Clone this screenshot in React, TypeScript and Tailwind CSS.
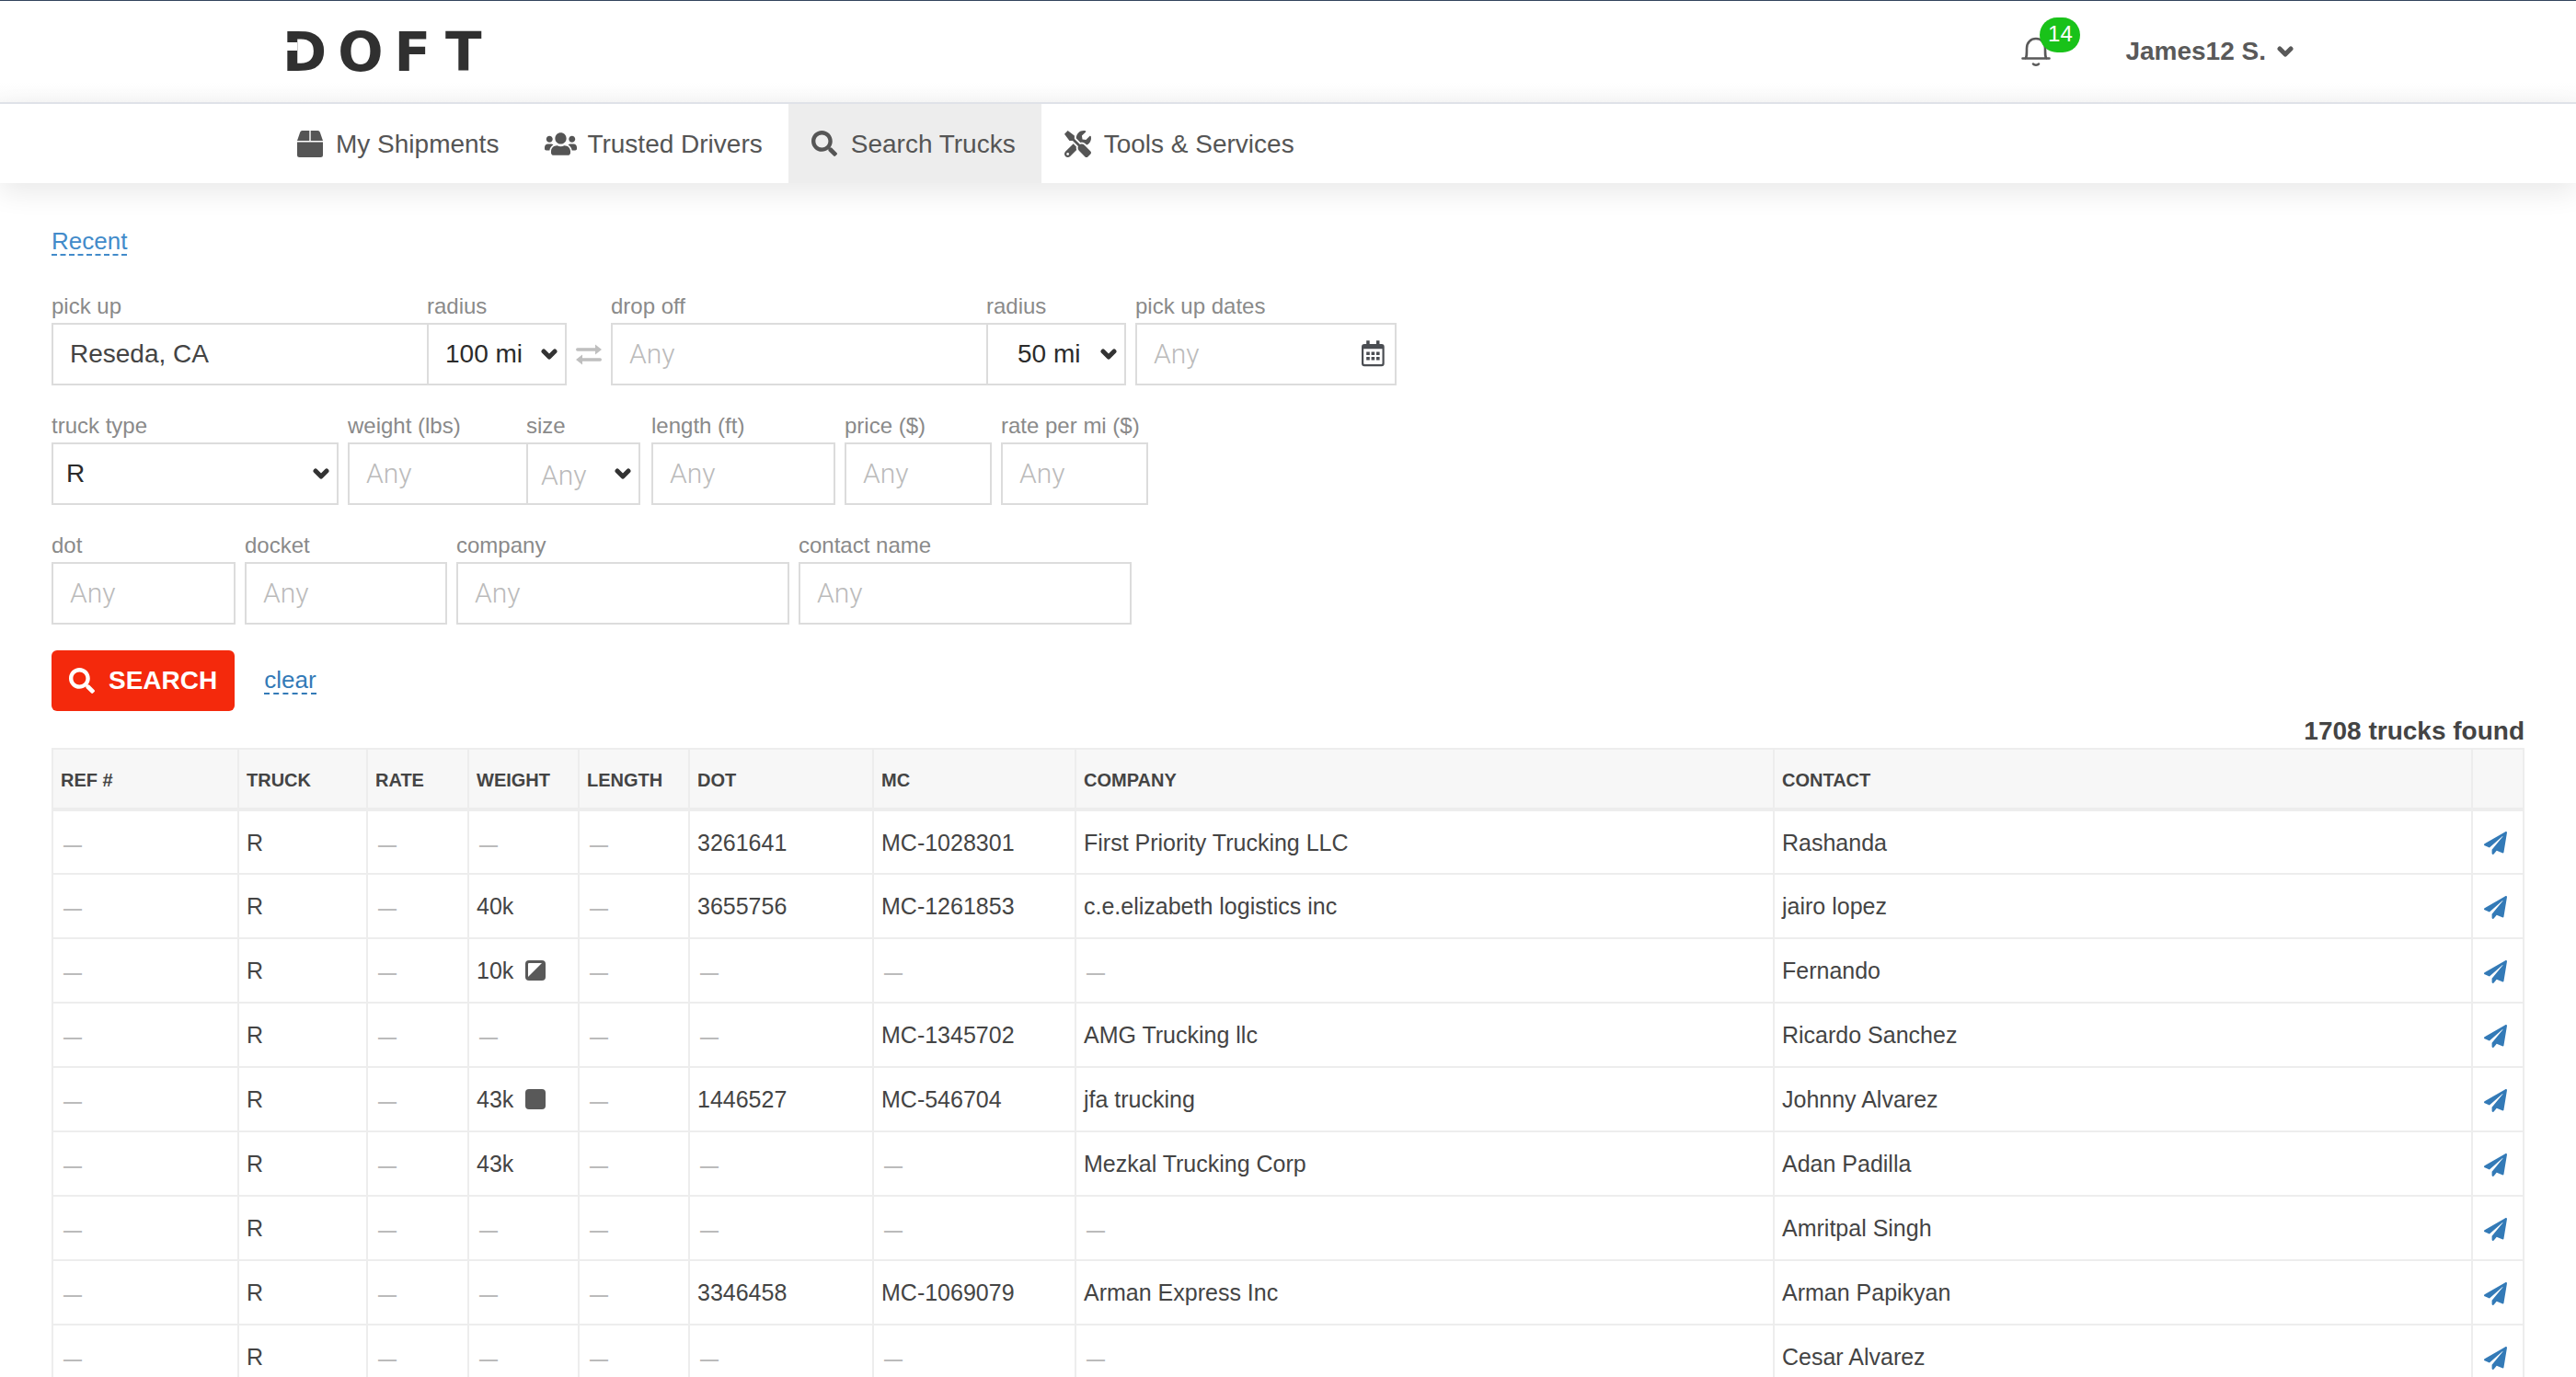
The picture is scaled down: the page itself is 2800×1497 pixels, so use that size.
import type { ReactNode } from 'react';
import { FaPaperPlane, FaSearch, FaTools, FaUsers } from 'react-icons/fa';

interface Truck {
  weight?: string;
  load?: 'full' | 'partial';
  dot?: string;
  mc?: string;
  company?: string;
  contact: string;
}

const trucks: Truck[] = [
  { dot: '3261641', mc: 'MC-1028301', company: 'First Priority Trucking LLC', contact: 'Rashanda' },
  { weight: '40k', dot: '3655756', mc: 'MC-1261853', company: 'c.e.elizabeth logistics inc', contact: 'jairo lopez' },
  { weight: '10k', load: 'partial', contact: 'Fernando' },
  { mc: 'MC-1345702', company: 'AMG Trucking llc', contact: 'Ricardo Sanchez' },
  { weight: '43k', load: 'full', dot: '1446527', mc: 'MC-546704', company: 'jfa trucking', contact: 'Johnny Alvarez' },
  { weight: '43k', company: 'Mezkal Trucking Corp', contact: 'Adan Padilla' },
  { contact: 'Amritpal Singh' },
  { dot: '3346458', mc: 'MC-1069079', company: 'Arman Express Inc', contact: 'Arman Papikyan' },
  { contact: 'Cesar Alvarez' },
];

const navItems = [
  { label: 'My Shipments', icon: <ShipmentIcon />, active: false },
  { label: 'Trusted Drivers', icon: <FaUsers size={35} />, active: false },
  { label: 'Search Trucks', icon: <FaSearch size={28} />, active: true },
  { label: 'Tools & Services', icon: <FaTools size={29} />, active: false },
];

const columns = ['REF #', 'TRUCK', 'RATE', 'WEIGHT', 'LENGTH', 'DOT', 'MC', 'COMPANY', 'CONTACT', ''];

function ShipmentIcon() {
  return (
    <svg viewBox="0 0 28 29" className="w-7 h-[29px]" fill="currentColor" aria-hidden="true">
      <path d="M5.500 0H13.300V11H0L3.200 1.700A2.500 2.500 0 015.500 0zM14.700 0H22.500a2.500 2.500 0 012.300 1.700L28 11H14.700zM0 12.500H28V26.500a2.500 2.500 0 01-2.500 2.500H2.500A2.500 2.500 0 010 26.500z" />
    </svg>
  );
}

function Caret({ className }: { className?: string }) {
  return (
    <svg viewBox="0 0 18 12" className={`w-[18px] h-3 ${className ?? ''}`} fill="none" aria-hidden="true">
      <path d="M3 3l6 6 6-6" stroke="currentColor" strokeWidth="5" strokeLinecap="round" strokeLinejoin="round" />
    </svg>
  );
}

function BellIcon() {
  return (
    <svg viewBox="0 0 32 32" className="size-8" fill="none" stroke="#595959" strokeWidth="2.6" strokeLinecap="round" strokeLinejoin="round" aria-hidden="true">
      <path d="M1.500 23.500h29M4.500 23.500c1.500-1.500 1.500-3.500 1.500-11C6 6 10.500 2 16 2s10 4 10 10.500c0 7.500 0 9.500 1.500 11" />
      <path d="M13 29.500c1.200 1.600 4.800 1.600 6 0" />
    </svg>
  );
}

function SwapIcon() {
  return (
    <svg viewBox="0 0 28 23" className="w-7 h-[23px]" fill="#bfbfbf" aria-hidden="true">
      <path d="M1.700 4.300H21V0.500L28 6 21 11.500V7.700H1.700a1.700 1.700 0 010-3.400zM26.300 18.700H7v3.800L0 17 7 11.500v3.800h19.300a1.700 1.700 0 010 3.400z" />
    </svg>
  );
}

function CalendarIcon() {
  return (
    <svg viewBox="0 0 26 30" className="w-[26px] h-[30px]" fill="#4a4d52" aria-hidden="true">
      <path
        fillRule="evenodd"
        d="M6.200 1.300h3.500V5h7.300V1.300h3.500V5h2.200a3 3 0 013 3v18.300a3 3 0 01-3 3H4a3 3 0 01-3-3V8a3 3 0 013-3h2.200zM3.200 10.300V26a1 1 0 001 1h18.300a1 1 0 001-1V10.300z"
      />
      <path d="M6.200 13.400h3.600V17H6.200zM11.600 13.400h3.600V17h-3.600zM17 13.400h3.600V17H17zM6.200 18.900h3.600v3.600H6.200zM11.600 18.900h3.600v3.600h-3.600zM17 18.900h3.600v3.600H17z" />
    </svg>
  );
}

function Field({ id, label, className, children }: { id: string; label: string; className: string; children: ReactNode }) {
  return (
    <div className={className}>
      <label htmlFor={id} className="block text-2xl leading-9 text-[#8a8a8a] whitespace-nowrap">
        {label}
      </label>
      {children}
    </div>
  );
}

const box = 'block w-full h-[68px] border-2 border-[#dcdcdc] bg-white outline-none';

function TextInput({ id, value, joined }: { id: string; value?: string; joined?: boolean }) {
  return (
    <input
      id={id}
      type="text"
      defaultValue={value}
      placeholder="Any"
      className={`${box} px-[18px] text-[#444] ${value ? 'text-[28px]' : 'text-[30px]'} placeholder:font-['Roboto'] placeholder:font-light placeholder:text-[#bbb] ${joined ? 'border-r-0' : ''}`}
    />
  );
}

function SelectInput({ id, value, className }: { id: string; value: string; className: string }) {
  return (
    <div className="relative">
      <select id={id} defaultValue={value} className={`${box} appearance-none ${className}`}>
        <option>{value}</option>
      </select>
      <Caret className="absolute right-[10px] top-7 text-[#333] pointer-events-none" />
    </div>
  );
}

function Value({ text }: { text?: string }) {
  return text ? <>{text}</> : <span className="pl-[3px] text-xl font-bold text-[#bbb]">—</span>;
}

function LoadMark({ load }: { load: 'full' | 'partial' }) {
  return (
    <svg viewBox="0 0 22 22" className="inline-block align-[-2px] ml-[13px] size-[22px]" aria-hidden="true">
      <rect width="22" height="22" rx="4" fill="#595959" />
      {load === 'partial' && <path d="M3 4a1 1 0 011-1h14L3 18z" fill="#fff" />}
    </svg>
  );
}

function Header() {
  return (
    <header className="border-t border-[#33445c] bg-linear-to-b from-white from-80% to-[#fafafa]">
      <div className="flex items-center justify-between h-[110px] max-w-[2206px] mx-auto px-[10px]">
        <a href="#" aria-label="DOFT" className="relative flex gap-3 pt-0.5 font-['DejaVu_Sans'] font-bold text-[58px] leading-none text-[#303030]">
          <span>D</span>
          <span>O</span>
          <span>F</span>
          <span className="pl-1">T</span>
          <span className="absolute left-1 top-5 w-3 h-[9px] bg-white" />
        </a>
        <div className="flex items-center gap-[81px]">
          <button type="button" aria-label="Notifications" className="relative">
            <BellIcon />
            <span className="absolute left-5 -top-[21px] w-11 h-[38px] rounded-full bg-[#19c219] text-white text-2xl leading-[36px] text-center">
              14
            </span>
          </button>
          <button type="button" className="flex items-center gap-3 font-bold text-[28px] text-[#595959]">
            James12 S.
            <Caret />
          </button>
        </div>
      </div>
    </header>
  );
}

function Nav() {
  return (
    <nav className="border-t-2 border-[#dfe2e8] bg-white shadow-[0_10px_30px_rgba(0,0,0,0.09)]">
      <div className="flex max-w-[2206px] mx-auto">
        {navItems.map((item) => (
          <a
            key={item.label}
            href="#"
            className={`flex items-center gap-[11px] h-[86px] pl-[22px] pr-7 text-[28px] text-[#555] ${item.active ? 'bg-[#ededed]' : ''}`}
          >
            <span className="flex justify-center w-[35px]">{item.icon}</span>
            <span className="pt-0.5">{item.label}</span>
          </a>
        ))}
      </div>
    </nav>
  );
}

function SearchForm() {
  return (
    <form className="flex flex-col gap-[26px]">
      <div className="flex gap-[10px]">
        <div className="flex">
          <Field id="pickup" label="pick up" className="w-[408px]">
            <TextInput id="pickup" value="Reseda, CA" joined />
          </Field>
          <Field id="pickup-radius" label="radius" className="w-[152px]">
            <SelectInput id="pickup-radius" value="100 mi" className="pl-[18px] text-[28px] text-[#2b2b2b]" />
          </Field>
        </div>
        <button type="button" aria-label="Swap" className="flex items-center h-[68px] mt-9">
          <SwapIcon />
        </button>
        <div className="flex">
          <Field id="dropoff" label="drop off" className="w-[408px]">
            <TextInput id="dropoff" joined />
          </Field>
          <Field id="dropoff-radius" label="radius" className="w-[152px]">
            <SelectInput id="dropoff-radius" value="50 mi" className="pl-8 text-[28px] text-[#2b2b2b]" />
          </Field>
        </div>
        <Field id="dates" label="pick up dates" className="w-[284px]">
          <div className="relative">
            <TextInput id="dates" />
            <span className="absolute right-[13px] top-[18px]">
              <CalendarIcon />
            </span>
          </div>
        </Field>
      </div>

      <div className="flex gap-[10px]">
        <Field id="truck-type" label="truck type" className="w-[312px]">
          <SelectInput id="truck-type" value="R" className="pl-[14px] text-[28px] text-[#2b2b2b]" />
        </Field>
        <div className="flex">
          <Field id="weight" label="weight (lbs)" className="w-[194px]">
            <TextInput id="weight" joined />
          </Field>
          <Field id="size" label="size" className="w-[126px] pr-0.5">
            <SelectInput id="size" value="Any" className="pl-[14px] pt-0.5 text-[30px] font-['Roboto'] font-light text-[#bbb]" />
          </Field>
        </div>
        <Field id="length" label="length (ft)" className="w-[200px]">
          <TextInput id="length" />
        </Field>
        <Field id="price" label="price ($)" className="w-40">
          <TextInput id="price" />
        </Field>
        <Field id="rate" label="rate per mi ($)" className="w-40">
          <TextInput id="rate" />
        </Field>
      </div>

      <div className="flex gap-[10px]">
        <Field id="dot" label="dot" className="w-[200px]">
          <TextInput id="dot" />
        </Field>
        <Field id="docket" label="docket" className="w-[220px]">
          <TextInput id="docket" />
        </Field>
        <Field id="company" label="company" className="w-[362px]">
          <TextInput id="company" />
        </Field>
        <Field id="contact" label="contact name" className="w-[362px]">
          <TextInput id="contact" />
        </Field>
      </div>

      <div className="flex items-center gap-8 mt-0.5">
        <button type="button" className="flex items-center gap-[15px] h-[66px] px-[19px] rounded-md bg-[#f4290c] text-white text-[28px] font-bold">
          <FaSearch size={28} />
          SEARCH
        </button>
        <a href="#" className="text-[26px] leading-7 text-[#337ab7] border-b-2 border-dashed border-[#337ab7]">
          clear
        </a>
      </div>
    </form>
  );
}

function TruckTable() {
  const cell = 'border-2 border-[#ededed] px-2 pt-0.5';

  return (
    <table className="w-full table-fixed border-collapse text-[#444]">
      <colgroup>
        <col className="w-[202px]" />
        <col className="w-[140px]" />
        <col className="w-[110px]" />
        <col className="w-[120px]" />
        <col className="w-[120px]" />
        <col className="w-[200px]" />
        <col className="w-[220px]" />
        <col />
        <col />
        <col className="w-[56px]" />
      </colgroup>
      <thead>
        <tr className="h-[66px] bg-[#f7f7f7]">
          {columns.map((name) => (
            <th key={name} className={`${cell} border-b-4 text-left text-xl font-bold`}>
              {name}
            </th>
          ))}
        </tr>
      </thead>
      <tbody>
        {trucks.map((truck) => (
          <tr key={truck.contact} className="h-[70px] text-[25px]">
            <td className={cell}><Value /></td>
            <td className={cell}>R</td>
            <td className={cell}><Value /></td>
            <td className={cell}>
              <Value text={truck.weight} />
              {truck.load && <LoadMark load={truck.load} />}
            </td>
            <td className={cell}><Value /></td>
            <td className={cell}><Value text={truck.dot} /></td>
            <td className={cell}><Value text={truck.mc} /></td>
            <td className={cell}><Value text={truck.company} /></td>
            <td className={cell}>{truck.contact}</td>
            <td className={cell}>
              <button type="button" aria-label={`Message ${truck.contact}`} className="block pl-1 text-[#337ab7]">
                <FaPaperPlane size={25} />
              </button>
            </td>
          </tr>
        ))}
      </tbody>
    </table>
  );
}

export default function App() {
  return (
    <div className="h-screen overflow-hidden bg-white font-['Liberation_Sans',sans-serif]">
      <Header />
      <Nav />
      <main className="px-14 pt-[49px]">
        <a href="#" className="inline-block text-[26px] leading-7 text-[#428bca] border-b-2 border-dashed border-[#428bca]">
          Recent
        </a>
        <div className="mt-[37px]">
          <SearchForm />
        </div>
        <p className="pt-1 text-right text-[28px] leading-9 font-bold text-[#444]">1708 trucks found</p>
        <TruckTable />
      </main>
    </div>
  );
}
